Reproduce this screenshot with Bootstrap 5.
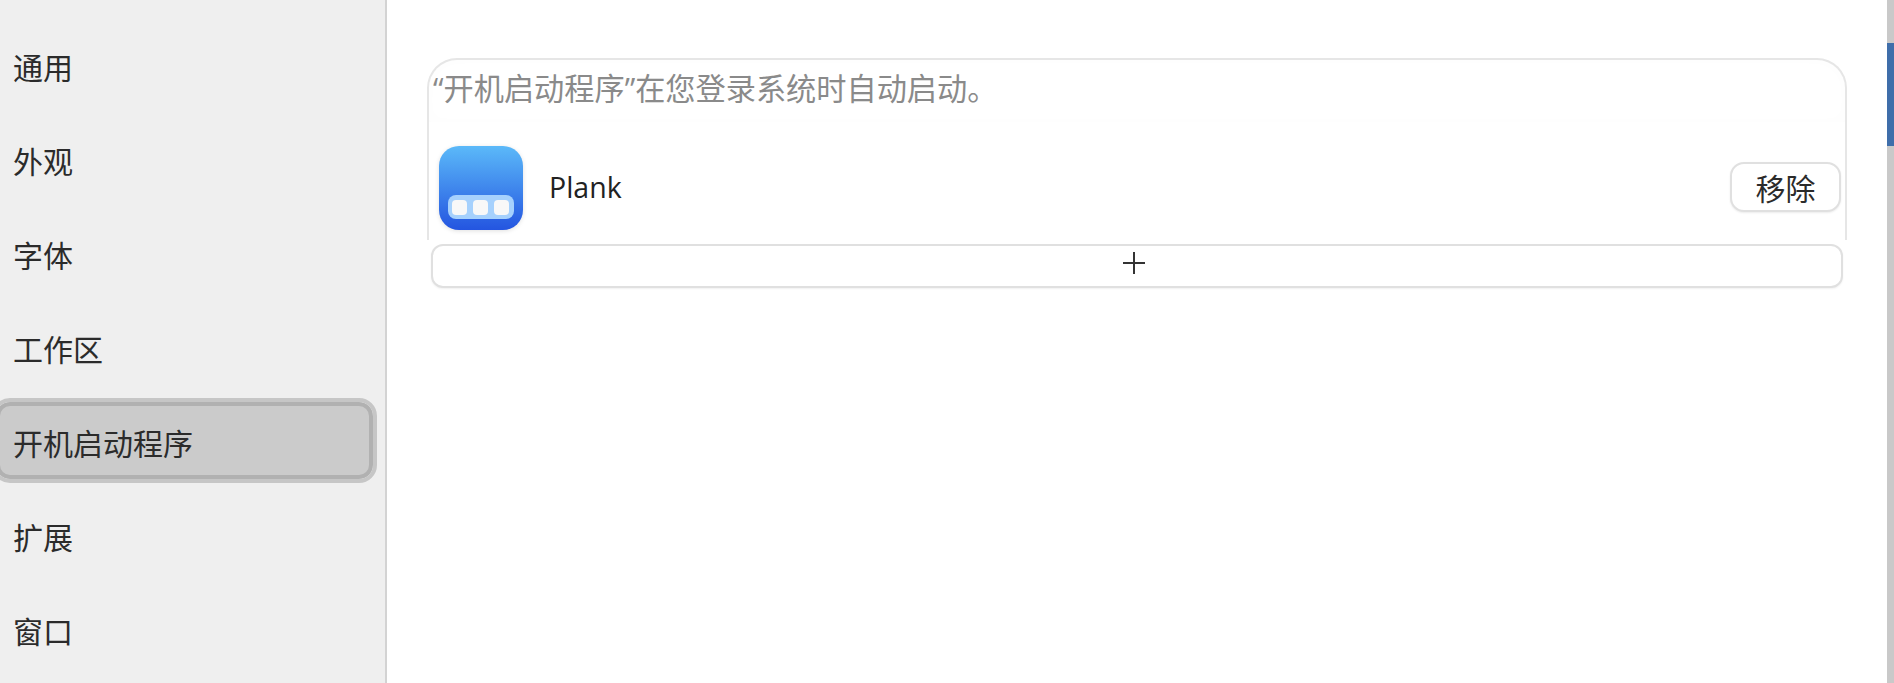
<!DOCTYPE html><html lang="zh-CN">
<head>
  <meta charset="UTF-8">
  <title>开机启动程序</title>
  <meta name="viewport" content="width=device-width, initial-scale=1">
  <link href="https://cdn.jsdelivr.net/npm/bootstrap@5.3.2/dist/css/bootstrap.min.css" rel="stylesheet">
  <style>
    body {
      height: 100vh;
      overflow: hidden;
      background: #fff;
      color: #2b2b2b;
      font-family: "Noto Sans CJK SC", "Noto Sans", sans-serif;
      font-size: 30px;
      line-height: 1.2;
    }
    .side-pane {
      width: 387px;
      background: #efefef;
      border-right: 2px solid #d3d3d3;
      padding-top: 24px;
      overflow: hidden;
    }
    .side-item {
      height: 85px;
      margin-bottom: 9px;
      margin-left: -8px;
      margin-right: 9px;
      padding-left: 21px;
      padding-bottom: 2px;
      border-radius: 18px;
    }
    .side-item.is-active {
      background: #cbcbcb;
      border: 4px solid #b1b1b1;
      outline: 4px solid #c6c6c6;
      padding-left: 13px;
      padding-top: 2px;
      padding-bottom: 0;
      height: 77px;
      margin: 11px 12px 15px -4px;
      border-radius: 14px;
    }
    .main-pane {
      padding: 58px 40px 0 40px;
    }
    .startup-box {
      height: 182px;
      border: 2px solid #e6e6e6;
      border-bottom: 0;
      border-radius: 30px 30px 0 0;
      padding: 0 4px;
    }
    .startup-note {
      color: #8a8a8a;
      font-family: "Open Sans", "Noto Sans CJK SC", sans-serif;
      font-size: 30.2px;
      height: 62px;
      padding-top: 11px;
      margin: 0 -4px;
      padding-left: 4px;
      border-radius: 28px 28px 0 0;
      box-shadow: inset 0 0 16px rgba(0,0,0,.012);
    }
    .app-row {
      padding: 24px 0 0 6px;
    }
    .app-icon {
      filter: drop-shadow(0 1px 2px rgba(0,0,0,.12));
    }
    .app-name {
      font-family: "Open Sans", "Noto Sans", sans-serif;
      font-size: 28.5px;
      margin: 0 0 1px 26px;
      color: #222;
    }
    .remove-btn {
      width: 111px;
      height: 50px;
      margin-bottom: 3px;
      padding: 0;
      background: #fff;
      color: #2b2b2b;
      font-size: 30px;
      line-height: 1;
      border: 2px solid #e0e0e0;
      border-radius: 14px;
      box-shadow: 0 1px 2px rgba(0,0,0,.08);
    }
    .add-btn {
      width: 1412px;
      height: 44px;
      margin: 4px 0 0 4px;
      padding: 0 7px 7px 0;
      background: #fff;
      border: 2px solid #e0e0e0;
      border-radius: 12px;
      box-shadow: 0 1px 2px rgba(0,0,0,.06);
    }
    .scroll-strip {
      width: 7px;
      background: #c9c9c9;
    }
    .scroll-thumb {
      height: 103px;
      margin-top: 43px;
      background: #3f6eaa;
    }
  </style>
</head>
<body class="d-flex">
<div class="side-pane flex-shrink-0">
  <div class="side-item d-flex align-items-center">通用</div>
  <div class="side-item d-flex align-items-center">外观</div>
  <div class="side-item d-flex align-items-center">字体</div>
  <div class="side-item d-flex align-items-center">工作区</div>
  <div class="side-item is-active d-flex align-items-center">开机启动程序</div>
  <div class="side-item d-flex align-items-center">扩展</div>
  <div class="side-item d-flex align-items-center">窗口</div>
</div>
<div class="main-pane flex-grow-1">
  <div class="startup-box">
    <div class="startup-note">“开机启动程序”在您登录系统时自动启动。</div>
    <div class="app-row d-flex align-items-center">
      <svg class="app-icon" width="84" height="84" viewBox="0 0 84 84">
        <defs>
          <linearGradient id="plankBg" x1="0" y1="0" x2="0" y2="1">
            <stop offset="0" stop-color="#5bb9f9"/>
            <stop offset="1" stop-color="#2455e0"/>
          </linearGradient>
        </defs>
        <rect width="84" height="84" rx="20" fill="url(#plankBg)"/>
        <rect x="9" y="49" width="66" height="24" rx="8" fill="#a6d1fd"/>
        <rect x="13" y="54" width="15" height="15" rx="4" fill="#f8f8f8"/>
        <rect x="34" y="54" width="15" height="15" rx="4" fill="#f8f8f8"/>
        <rect x="55" y="54" width="15" height="15" rx="4" fill="#f8f8f8"/>
      </svg>
      <span class="app-name">Plank</span>
      <button type="button" class="btn remove-btn ms-auto">移除</button>
    </div>
  </div>
  <button type="button" class="btn add-btn d-flex align-items-center justify-content-center">
    <svg width="24" height="24" viewBox="0 0 24 24"><path d="M12 1v22M1 12h22" stroke="#333" stroke-width="2" fill="none"/></svg>
  </button>
</div>
<div class="scroll-strip flex-shrink-0"><div class="scroll-thumb"></div></div>
<script src="https://cdn.jsdelivr.net/npm/bootstrap@5.3.2/dist/js/bootstrap.bundle.min.js"></script>
</body>
</html>
